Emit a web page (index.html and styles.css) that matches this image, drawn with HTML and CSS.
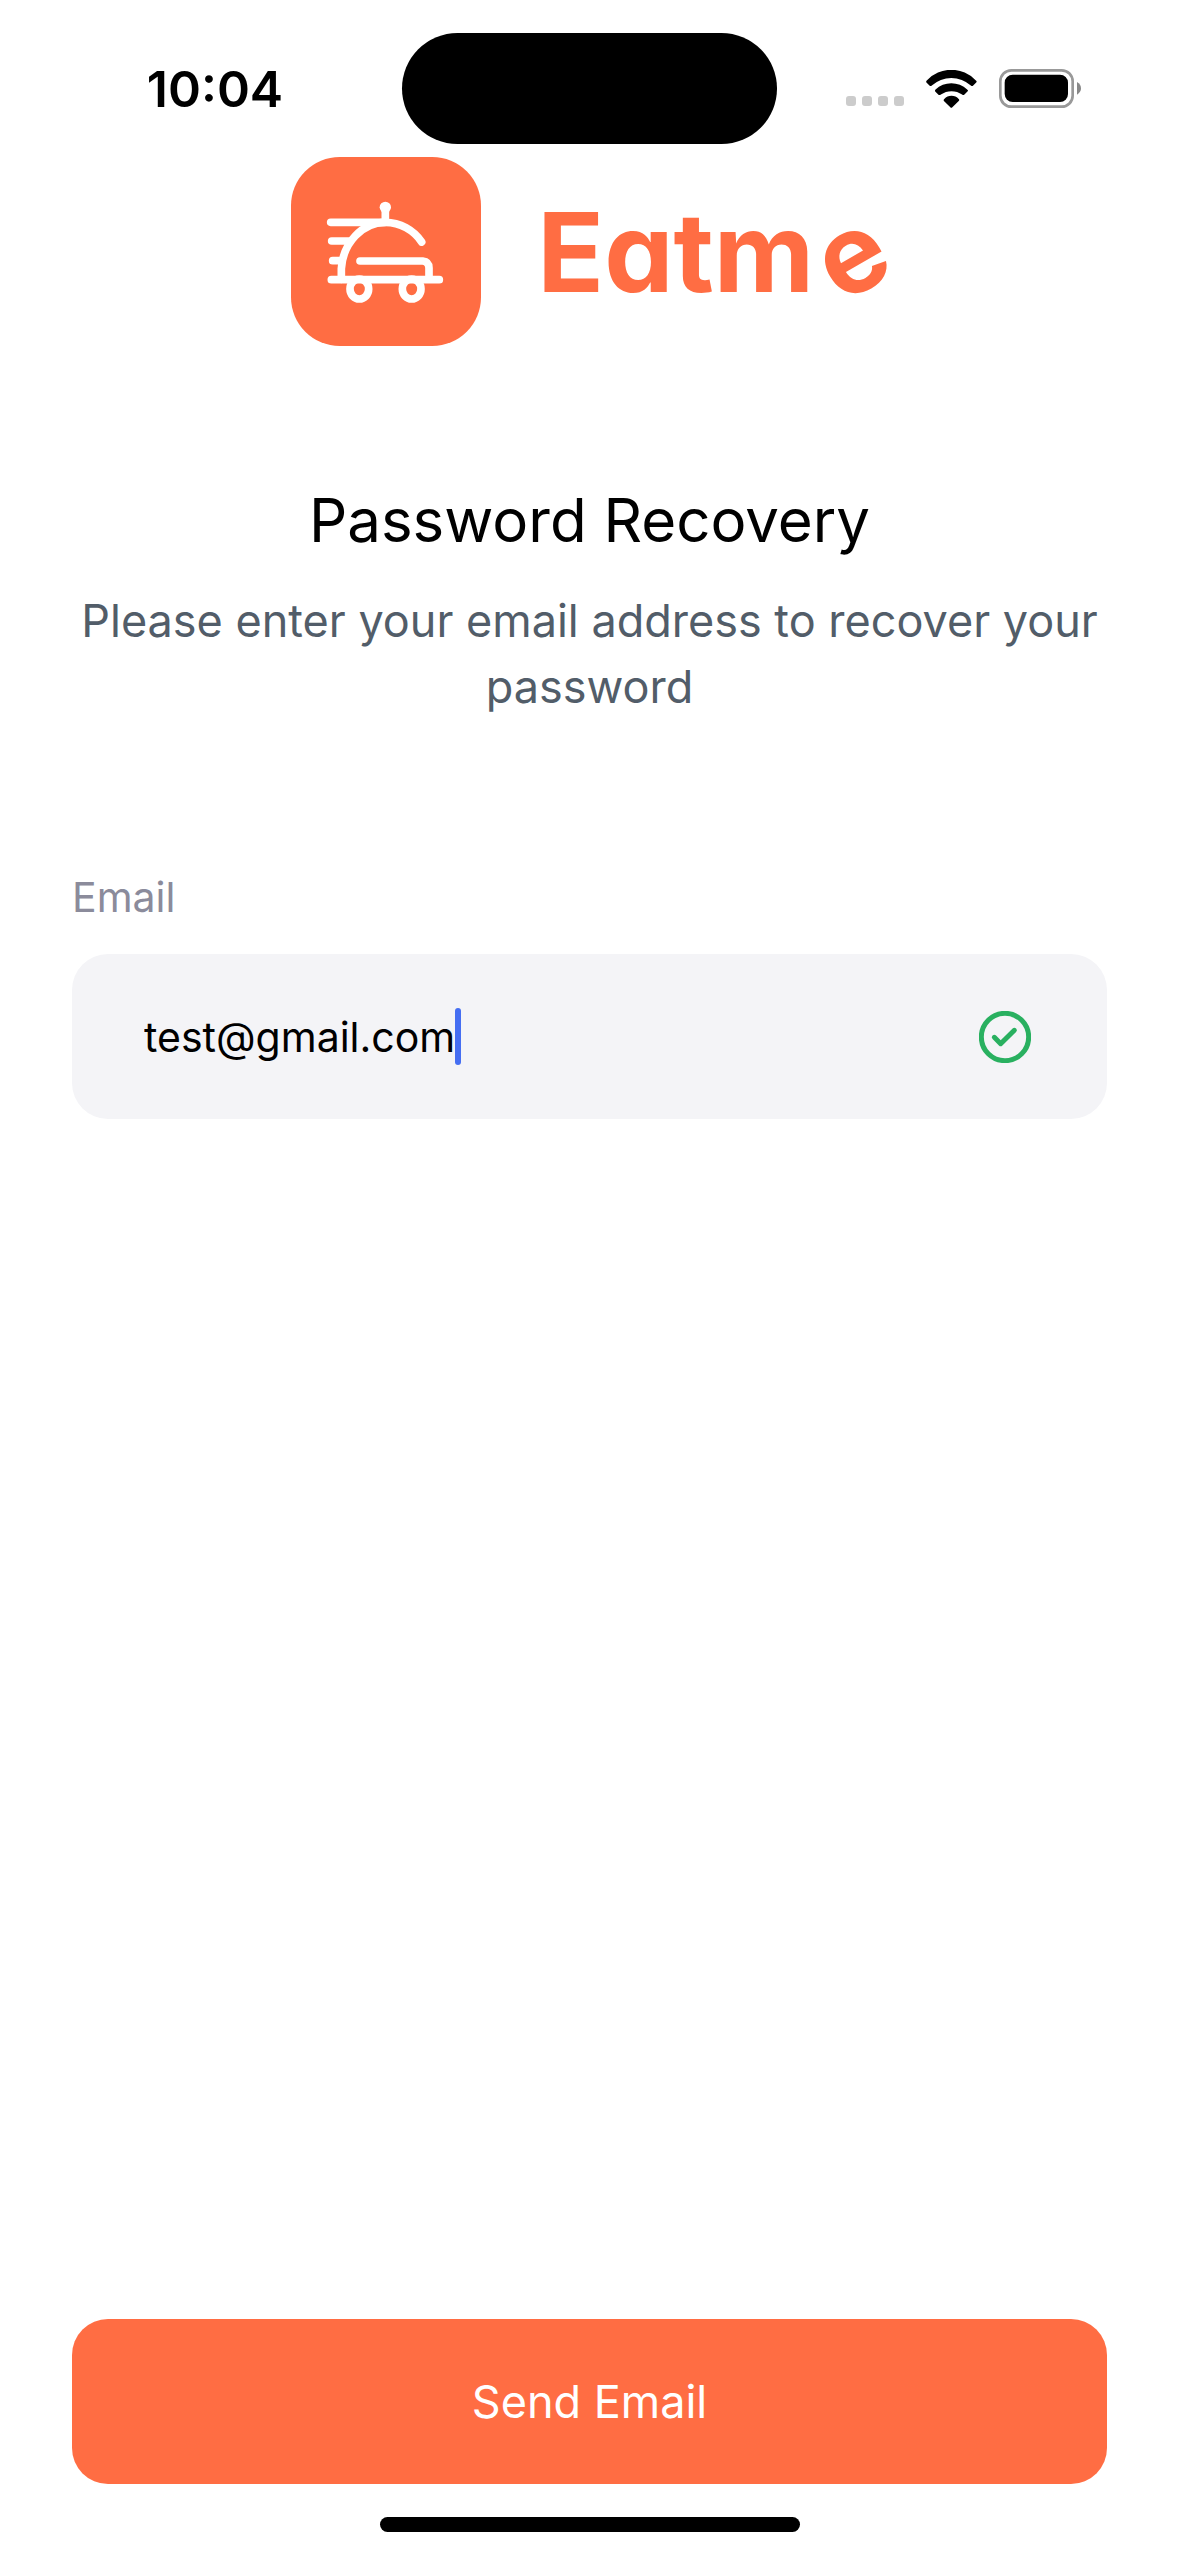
FILE: index.html
```html
<!DOCTYPE html>
<html lang="en">
<head>
<meta charset="utf-8">
<meta name="viewport" content="width=device-width, initial-scale=1">
<title>Password Recovery</title>
<link rel="stylesheet" href="styles.css">
</head>
<body class="screen">
  <header class="status">
    <time class="status-time">10:04</time>
    <div class="island"></div>
    <div class="status-icons">
      <div class="signal"><i class="dot"></i><i class="dot"></i><i class="dot"></i><i class="dot"></i></div>
      <svg class="wifi" viewBox="319 86 151 113" aria-hidden="true">
        <path d="M321 117A100 100 0 0 1 467 117Q471 120 468 123L459 132Q456 135 452 132A87 87 0 0 0 336 132Q332 135 329 132L320 123Q318 120 321 117Z"/>
        <path d="M347 144A68 68 0 0 1 441 144Q446 147 442 150L433 159Q430 162 426 159A54 54 0 0 0 363 159Q358 162 355 159L346 150Q344 147 347 144Z"/>
        <path d="M373 172A29 29 0 0 1 416 172Q419 175 416 178L397 197Q394 200 391 197L372 178Q370 175 373 172Z"/>
      </svg>
      <svg class="battery" viewBox="537 84 246 117" aria-hidden="true">
        <rect x="541" y="88" width="217" height="109" rx="33" fill="none" stroke="#999" stroke-width="8"/>
        <rect x="554" y="101" width="190" height="82" rx="24"/>
        <path d="M771 123Q783 130 783 142Q783 154 771 161Z" fill="#888"/>
      </svg>
    </div>
  </header>

  <main class="content">
    <div class="brand">
      <svg class="brand-icon" viewBox="60 51 570 567" aria-hidden="true">
        <rect x="60" y="51" width="570" height="567" rx="146" fill="#ff6d43"/>
        <g fill="none" stroke="#fff" stroke-width="23" stroke-linecap="round" stroke-linejoin="round">
          <path d="M179 247H343A133 133 0 0 1 452 306"/>
          <path d="M343 247A133 150 0 0 0 211 386V418"/>
          <path d="M182 303H232M185 362H212M181 419H505"/>
          <path d="M267 363H455Q474 365 474 384V416"/>
          <path d="M343 210V245"/>
          <ellipse cx="265" cy="447" rx="28" ry="30"/>
          <ellipse cx="422" cy="447" rx="28" ry="30"/>
        </g>
        <circle cx="343" cy="202" r="17" fill="#fff"/>
      </svg>
      <div class="brand-name">Eatm<span class="tilt">e</span></div>
    </div>

    <h1 class="title">Password Recovery</h1>
    <p class="lead">Please enter your email address to recover your password</p>

    <form class="form" id="recovery">
      <label class="label" for="email">Email</label>
      <div class="field">
        <input class="input" id="email" type="text" inputmode="email" value="test@gmail.com">
        <span class="caret"></span>
        <svg class="check" viewBox="117 212 156 156" aria-hidden="true">
          <circle cx="195" cy="290" r="71"/>
          <path d="M163 291L182 310L223 270"/>
        </svg>
      </div>
    </form>

    <button class="submit" type="submit" form="recovery">Send Email</button>
  </main>

  <footer class="home"><div class="home-bar"></div></footer>
</body>
</html>
```

FILE: styles.css
```css
* {
  box-sizing: border-box;
}

.screen {
  display: flex;
  flex-direction: column;
  min-height: 100vh;
  margin: 0;
  background: #fff;
  color: #000;
  font-family: Inter, "Liberation Sans", sans-serif;
}

.status {
  display: grid;
  grid-template-columns: 1fr 375px 1fr;
  align-items: center;
  padding-top: 33px;
}

.status-time {
  padding-left: 28px;
  font-size: 50px;
  font-weight: 600;
  line-height: 60px;
  text-align: center;
}

.island {
  height: 111px;
  border-radius: 56px;
  background: #000;
}

.status-icons {
  display: flex;
  justify-content: flex-end;
  align-items: center;
  gap: 22px;
  padding-right: 98px;
}

.signal {
  display: flex;
  align-self: flex-end;
  gap: 6px;
  padding-bottom: 2px;
}

.dot {
  width: 10px;
  height: 10px;
  border-radius: 3px;
  background: #ccc;
}

.wifi {
  width: 51px;
  height: 38px;
}

.battery {
  width: 82px;
  height: 39px;
}

.content {
  display: flex;
  flex: 1;
  flex-direction: column;
  padding: 13px 72px 33px;
}

.brand {
  display: flex;
  justify-content: center;
  align-items: center;
  gap: 56px;
}

.brand-icon {
  width: 190px;
  height: 189px;
}

.brand-name {
  color: #ff6d43;
  font-size: 110px;
  font-weight: 700;
  font-feature-settings: "cv11";
  line-height: 130px;
}

.tilt {
  display: inline-block;
  margin-left: 8px;
  transform: rotate(-30deg);
  transform-origin: 50% 58%;
}

.title {
  margin: 134px 0 28px;
  font-size: 60px;
  font-weight: 400;
  line-height: 80px;
  text-align: center;
}

.lead {
  margin: 0;
  color: #525d69;
  font-size: 45px;
  line-height: 66px;
  text-align: center;
}

.form {
  display: flex;
  flex-direction: column;
  gap: 31px;
  margin: 151px 0 48px;
}

.label {
  color: #8b8b9b;
  font-size: 41px;
  line-height: 52px;
}

.field {
  display: flex;
  align-items: center;
  height: 165px;
  padding: 0 76px 0 72px;
  border-radius: 36px;
  background: #f4f4f7;
}

.input {
  field-sizing: content;
  min-width: 0;
  padding: 0;
  border: 0;
  outline: 0;
  background: none;
  color: #000;
  font: inherit;
  font-size: 41px;
  line-height: 52px;
}

.caret {
  flex: none;
  width: 6px;
  height: 57px;
  border-radius: 3px;
  background: #456ef2;
}

.check {
  flex: none;
  width: 52px;
  height: 52px;
  margin-left: auto;
  fill: none;
  stroke: #29b060;
  stroke-width: 15;
  stroke-linecap: round;
  stroke-linejoin: round;
}

.submit {
  height: 165px;
  margin-top: auto;
  border: 0;
  border-radius: 36px;
  background: #ff6d43;
  color: #fff;
  font: inherit;
  font-size: 45px;
}

.home {
  display: flex;
  justify-content: center;
  padding-bottom: 24px;
}

.home-bar {
  width: 420px;
  height: 15px;
  border-radius: 8px;
  background: #000;
}
```
